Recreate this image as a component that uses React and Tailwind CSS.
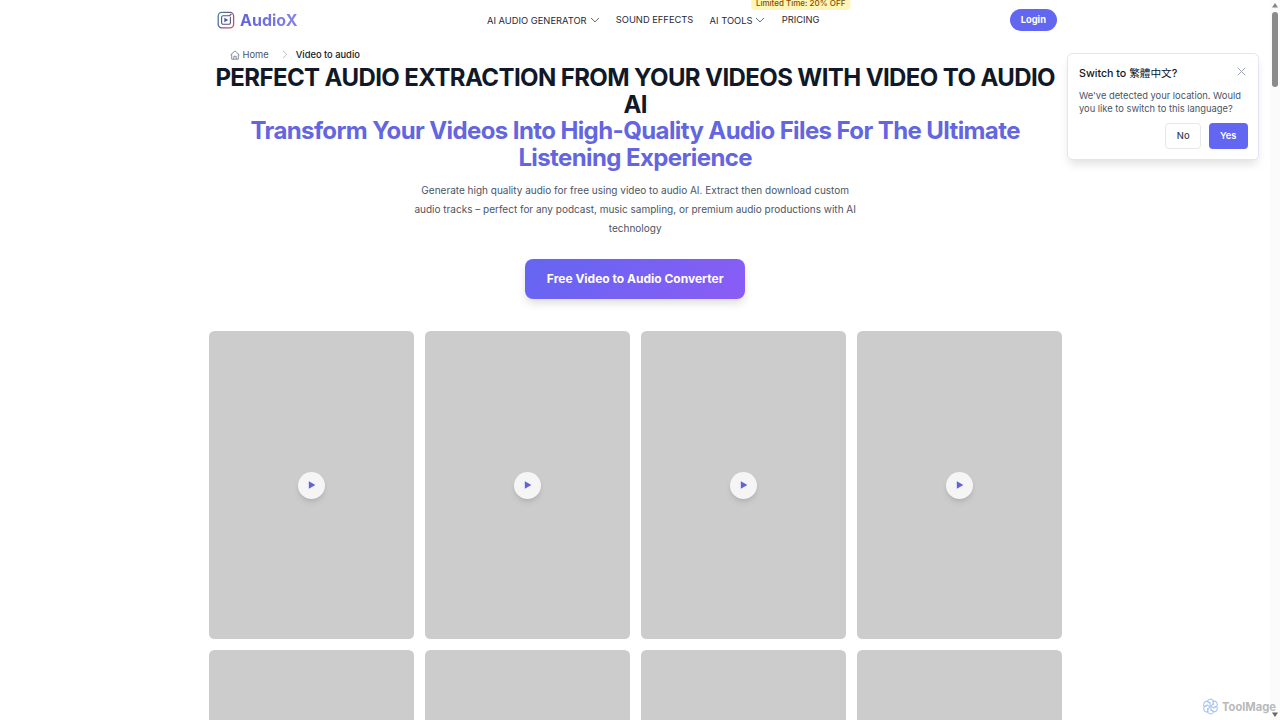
import React from 'react';

const navLinks = [
    { label: 'AI AUDIO GENERATOR', menu: true },
    { label: 'SOUND EFFECTS' },
    { label: 'AI TOOLS', menu: true },
    { label: 'PRICING', badge: 'Limited Time: 20% OFF' },
];

const videos = [1, 2, 3, 4, 5, 6, 7, 8];

const Logo = () => (
    <svg width="18" height="18" viewBox="0 0 18 18" fill="none" className="shrink-0">
        <defs>
            <linearGradient id="logoStroke" x1="1" y1="4" x2="17" y2="12" gradientUnits="userSpaceOnUse">
                <stop offset="0" stopColor="#3f83a8" />
                <stop offset="0.5" stopColor="#6d5a8d" />
                <stop offset="1" stopColor="#d64b5b" />
            </linearGradient>
        </defs>
        <rect x="1.2" y="1.4" width="15.4" height="15.4" rx="3.6" stroke="url(#logoStroke)" strokeWidth="1.3" />
        <path d="M13.4 5.7v6.1a1.5 1.5 0 0 1-1.5 1.5H6.1a1.5 1.5 0 0 1-1.5-1.5V6.2a1.5 1.5 0 0 1 1.5-1.5h6.3l2-1.7" stroke="#545486" strokeWidth="1.1" />
        <path d="M7.3 6.7 11.3 9l-4 2.3z" fill="#4c5b94" />
    </svg>
);

const HomeIcon = () => (
    <svg width="10" height="10" viewBox="0 0 10 10" fill="none" stroke="#6b7280" strokeWidth="0.8" strokeLinejoin="round" className="shrink-0">
        <path d="M.6 5 5 .9 9.4 5M1.7 4.2v5h6.6v-5M3.8 9.2V6.3h2.4v2.9" />
    </svg>
);

const ChevronIcon = () => (
    <svg width="10" height="10" viewBox="0 0 10 10" fill="none" stroke="#4b5563" strokeWidth="0.9" strokeLinecap="round" strokeLinejoin="round" className="shrink-0">
        <path d="M1.3 3.2 5 6.9l3.7-3.7" />
    </svg>
);

const Header = () => (
    <header className="flex h-10 items-center pr-[9px] pl-2">
        <div className="flex w-[270.5px] items-center gap-[5.5px]">
            <Logo />
            <span className="bg-gradient-to-r from-[#6161d8] to-[#8484e4] bg-clip-text text-base font-bold text-transparent">AudioX</span>
        </div>
        <nav className="flex items-center gap-[16.3px] text-[9.33px] text-gray-800">
            {navLinks.map((link) => (
                <a key={link.label} className="relative flex items-center gap-[3px] whitespace-nowrap">
                    <span className={link.menu ? 'pt-px' : ''}>{link.label}</span>
                    {link.menu && <ChevronIcon />}
                    {link.badge && (
                        <span className="absolute -top-[13px] left-1/2 -translate-x-1/2 rounded-b bg-[#fef6b6] px-[5px] pb-[3px] text-[8px] leading-[7px] font-medium text-yellow-800">
                            {link.badge}
                        </span>
                    )}
                </a>
            ))}
        </nav>
        <button className="mr-[-4px] ml-auto h-[21.5px] w-[47px] rounded-full bg-[#6366f1] text-[9.33px] font-bold text-white">Login</button>
    </header>
);

const Breadcrumb = () => (
    <div className="flex h-[13px] items-center pl-[21.5px] text-[9.33px]">
        <HomeIcon />
        <span className="ml-[2.5px] text-gray-600">Home</span>
        <svg width="6" height="9" viewBox="0 0 6 9" fill="none" stroke="#b4b8c0" strokeWidth="0.9" className="mr-[8px] ml-[13px]">
            <path d="M1 .8 4.8 4.5 1 8.2" />
        </svg>
        <span className="font-medium text-gray-900">Video to audio</span>
    </div>
);

const Hero = () => (
    <section className="flex flex-col items-center text-center">
        <h1 className="mt-[4px] w-full text-[24px] leading-[26.67px] font-bold tracking-[-0.6px] text-[#111827]">
            PERFECT AUDIO EXTRACTION FROM YOUR VIDEOS WITH VIDEO TO AUDIO AI
            <span className="block text-[#6366e0]">
                Transform Your Videos Into High-Quality Audio Files For The Ultimate Listening Experience
            </span>
        </h1>
        <p className="mt-[9.5px] w-[448px] text-[10px] leading-[18.67px] text-gray-600">
            Generate high quality audio for free using video to audio AI. Extract then download custom audio tracks – perfect for any podcast, music sampling, or premium audio productions with AI technology
        </p>
        <button className="mt-[21.8px] h-10 w-[219.5px] rounded-lg bg-[linear-gradient(135deg,#6366f1,#8b5cf6)] text-xs font-bold text-white shadow-[0_5px_9px_-1px_rgba(0,0,0,0.14)]">
            Free Video to Audio Converter
        </button>
    </section>
);

const VideoCard = () => (
    <div className="flex h-[308px] items-center justify-center rounded-[5.33px] bg-[#cccccc]">
        <div className="flex h-[27px] w-[27px] items-center justify-center rounded-full bg-[#f5f5f5] shadow-md">
            <svg width="8" height="8" viewBox="0 0 8 8" fill="#6163d8" className="ml-px">
                <path d="M.8.3 7.4 4 .8 7.7z" />
            </svg>
        </div>
    </div>
);

const LanguagePopup = () => (
    <div className="absolute top-[53.33px] right-[20.67px] h-[107px] w-[192px] rounded-[5.33px] border border-[#e4e4f4] bg-white px-[10.67px] pt-[12.5px] shadow-[0_6px_10px_-2px_rgba(0,0,0,0.12)]">
        <div className="flex items-center justify-between">
            <h3 className="text-[10.67px] leading-[14px] font-medium text-gray-900">
                Switch to <span className="font-normal">繁體中文</span>?
            </h3>
            <svg width="9" height="9" viewBox="0 0 9 9" stroke="#9ca3af" strokeWidth="1" strokeLinecap="round" className="mr-[2px] mb-[4px]">
                <path d="M1 1l7 7M8 1 1 8" />
            </svg>
        </div>
        <p className="mt-[8.5px] text-[9.33px] leading-[13px] whitespace-nowrap text-gray-600">
            We've detected your location. Would
            <br />
            you like to switch to this language?
        </p>
        <div className="mt-2 flex justify-end gap-[7.5px] text-[9.33px]">
            <button className="h-[26px] w-[36px] rounded border border-gray-200 font-medium text-gray-700">No</button>
            <button className="h-[26px] w-[39px] rounded bg-[#6366f1] font-semibold text-white">Yes</button>
        </div>
    </div>
);

const Scrollbar = () => (
    <div className="flex h-full w-[10px] shrink-0 flex-col items-center bg-[#fbfbfb]">
        <svg width="6" height="5" viewBox="0 0 6 5" fill="#858585" className="mt-[3px]">
            <path d="M3 0 6 4.5H0z" />
        </svg>
        <div className="mt-1 h-[75px] w-[6px] rounded-full bg-[#8b8b8b]" />
        <svg width="6" height="5" viewBox="0 0 6 5" fill="#666666" className="mt-auto mb-[3px]">
            <path d="M0 .5h6L3 5z" />
        </svg>
    </div>
);

const Watermark = () => (
    <div className="absolute right-[4px] bottom-[5px] flex items-center gap-[3px]">
        <svg width="17" height="17" viewBox="0 0 17 17" fill="none" stroke="#a9c5f5" strokeWidth="1.1">
            {[0, 60, 120, 180, 240, 300].map((angle) => (
                <path key={angle} d="M8.5 5.4 5.4 3.8C5.6.9 9.5.1 11.4 2.7v3.5L8.5 8" transform={`rotate(${angle} 8.5 8.5)`} />
            ))}
        </svg>
        <span className="text-[11.2px] leading-4 font-bold text-[#b9b9b9]">ToolMage</span>
    </div>
);

const App = () => {
    return (
        <div className="relative flex h-[720px] w-[1280px] overflow-hidden bg-white font-['Inter','Noto_Sans_CJK_TC',sans-serif]">
            <main className="flex min-w-0 flex-1 justify-center pl-[0.4px]">
                <div className="w-[853.33px] shrink-0">
                    <Header />
                    <div className="pt-2">
                        <Breadcrumb />
                    </div>
                    <Hero />
                    <div className="mt-[32px] grid grid-cols-4 gap-[10.67px]">
                        {videos.map((id) => (
                            <VideoCard key={id} />
                        ))}
                    </div>
                </div>
            </main>
            <Scrollbar />
            <LanguagePopup />
            <Watermark />
        </div>
    );
};

export default App;
